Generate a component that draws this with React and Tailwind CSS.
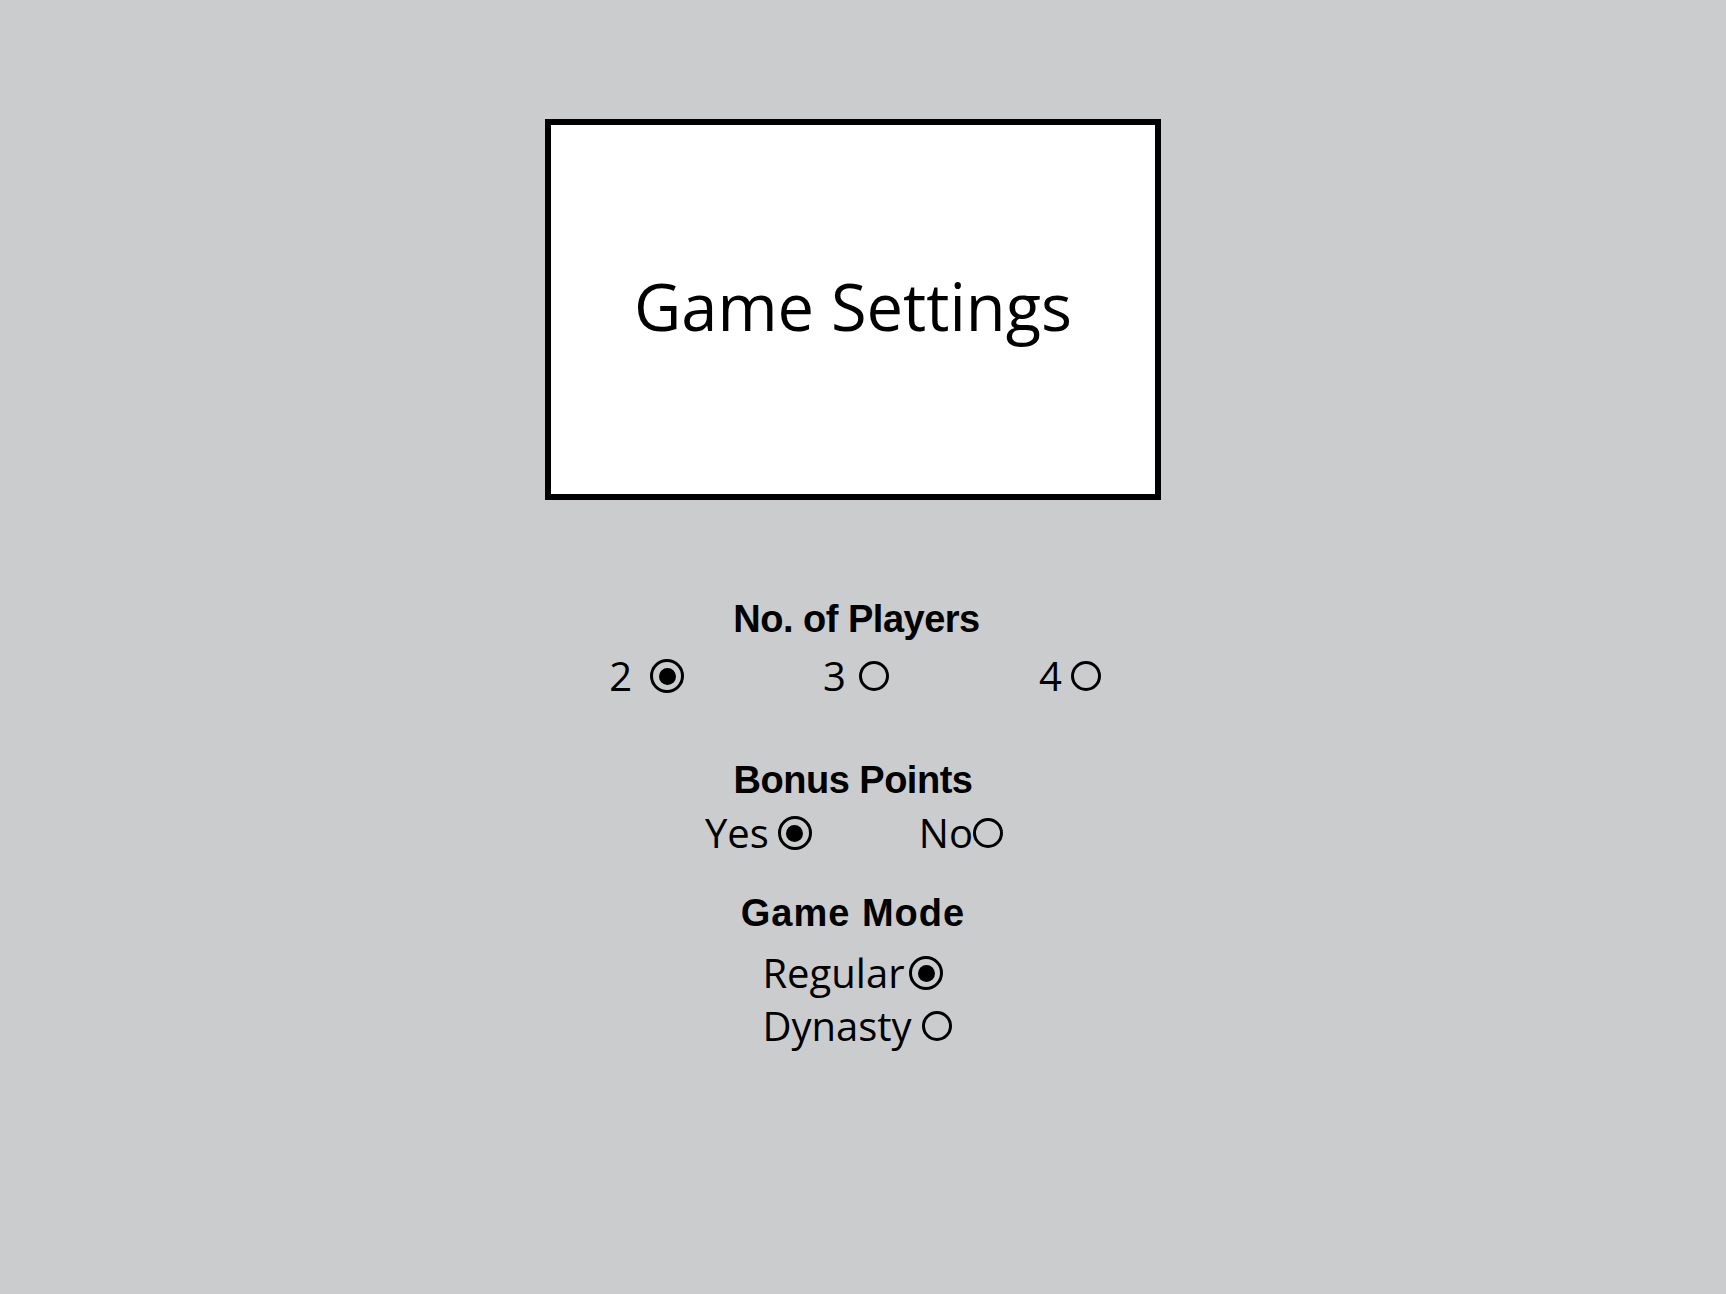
import React, { useState } from 'react';

const Radio = ({ checked, onClick, className = '' }) => (
  <span
    onClick={onClick}
    className={
      'inline-flex items-center justify-center rounded-full border-black cursor-pointer shrink-0 ' +
      (checked ? 'w-[34px] h-[34px] border-[3.5px] ' : 'w-[30px] h-[30px] border-[3px] ') +
      className
    }
  >
    {checked && <span className="w-[17px] h-[17px] rounded-full bg-black" />}
  </span>
);

const Option = ({ label, checked, onClick, gap, className = '' }) => (
  <div className={'flex items-center ' + className}>
    <span className="text-[40px] leading-[50px] text-black" style={{ marginRight: gap }}>
      {label}
    </span>
    <Radio checked={checked} onClick={onClick} />
  </div>
);

const App = () => {
  const [players, setPlayers] = useState(2);
  const [bonus, setBonus] = useState(true);
  const [mode, setMode] = useState('regular');

  return (
    <div className="min-h-screen bg-[#cbcccd] flex justify-center pr-[20px] font-['Open_Sans',sans-serif]">
      <div className="flex flex-col items-center pt-[119px]">
        <div className="w-[616px] h-[381px] border-[6px] border-black bg-white flex items-center justify-center">
          <h1 className="text-[65px] leading-none text-black pb-[6px]">Game Settings</h1>
        </div>

        <h2 className="mt-[99px] pl-[7px] text-[38px] leading-[40px] font-bold tracking-[-0.5px] font-['Liberation_Sans',sans-serif] text-black">
          No. of Players
        </h2>
        <div className="mt-[12px] flex items-center pl-[4px]">
          <Option label="2" gap={18} checked={players === 2} onClick={() => setPlayers(2)} />
          <Option
            label="3"
            gap={13}
            className="ml-[139px]"
            checked={players === 3}
            onClick={() => setPlayers(3)}
          />
          <Option
            label="4"
            gap={9}
            className="ml-[150px]"
            checked={players === 4}
            onClick={() => setPlayers(4)}
          />
        </div>

        <h2 className="mt-[59px] text-[38px] leading-[40px] font-bold tracking-[-0.5px] font-['Liberation_Sans',sans-serif] text-black">
          Bonus Points
        </h2>
        <div className="mt-[8px] flex items-center gap-[107px] pl-[2px]">
          <Option label="Yes" gap={9} checked={bonus} onClick={() => setBonus(true)} />
          <Option label="No" gap={0} checked={!bonus} onClick={() => setBonus(false)} />
        </div>

        <h2 className="mt-[35px] text-[38px] leading-[40px] font-bold tracking-[1px] font-['Liberation_Sans',sans-serif] text-black">
          Game Mode
        </h2>
        <div className="mt-[15px] flex flex-col items-start pl-[8px]">
          <Option label="Regular" gap={5} checked={mode === 'regular'} onClick={() => setMode('regular')} />
          <Option
            label="Dynasty"
            gap={10}
            className="mt-[3px]"
            checked={mode === 'dynasty'}
            onClick={() => setMode('dynasty')}
          />
        </div>
      </div>
    </div>
  );
};

export default App;
